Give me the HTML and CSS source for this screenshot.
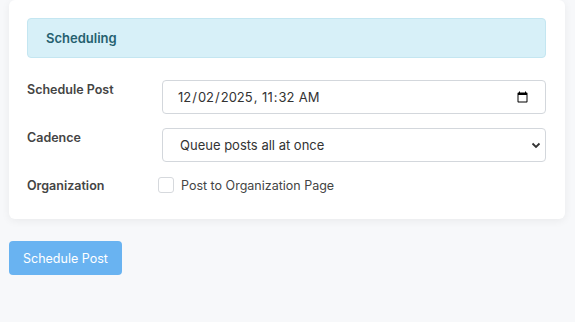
FILE: index.html
```html
<!DOCTYPE html>
<html lang="en">
<head>
    <meta charset="UTF-8">
    <meta name="viewport" content="width=device-width, initial-scale=1.0">
    <title>Schedule Post</title>
    <link rel="stylesheet" href="styles.css">
</head>
<body>

<div class="card">
    <div class="section-title">Scheduling</div>

    <div class="form-row">
        <label class="row-label" for="scheduleAt">Schedule Post</label>
        <input type="datetime-local" id="scheduleAt" value="2025-12-02T11:32">
    </div>
    <div class="form-row">
        <label class="row-label" for="cadence">Cadence</label>
        <select id="cadence">
            <option>Queue posts all at once</option>
            <option>One post per day</option>
            <option>One post per week</option>
        </select>
    </div>
    <div class="form-row check-row">
        <span class="row-label">Organization</span>
        <label class="check-label"><input type="checkbox" id="orgPage"> Post to Organization Page</label>
    </div>
</div>

<button class="button">Schedule Post</button>

</body>
</html>
```

FILE: styles.css
```css
body {
    font-family: Inter, "Noto Sans", Arial, sans-serif;
    background-color: #f7f8fa;
    margin: 0;
    padding: 0 10px 0 9px;
    color: #333;
}
.card {
    background: white;
    border-radius: 6px;
    box-shadow: 0 2px 8px rgba(0, 0, 0, 0.06);
    padding: 18px 19px 25px 18px;
}
.section-title {
    background-color: #d7f0f8;
    border: 1px solid #c4e6f1;
    border-radius: 4px;
    color: #25606f;
    font-size: 13px;
    font-weight: 600;
    height: 38px;
    line-height: 38px;
    padding-left: 18px;
    margin-bottom: 22px;
}
.form-row {
    display: flex;
    margin-bottom: 14px;
}
.row-label {
    width: 135px;
    flex-shrink: 0;
    font-size: 12.5px;
    font-weight: 600;
    color: #444;
    padding-top: 2px;
}
input[type="datetime-local"], select {
    flex: 1;
    height: 34px;
    padding: 0 14px;
    border: 1px solid #d3d7dc;
    border-radius: 4px;
    font-family: inherit;
    font-size: 13px;
    color: #333;
    background-color: white;
    box-sizing: border-box;
}
select {
    appearance: none;
    padding-left: 17px;
    background-image: url("data:image/svg+xml,%3Csvg xmlns='http://www.w3.org/2000/svg' width='10' height='8' viewBox='0 0 10 8'%3E%3Cpath d='M1.5 2.5 5 6 8.5 2.5' fill='none' stroke='%23333' stroke-width='1.8'/%3E%3C/svg%3E");
    background-repeat: no-repeat;
    background-position: right 4px center;
}
.check-row {
    align-items: center;
    margin-bottom: 0;
    height: 18px;
}
.check-row .row-label {
    padding-top: 0;
}
.check-label {
    display: flex;
    align-items: center;
    gap: 7px;
    font-size: 12.5px;
    color: #444;
    margin-left: -4px;
}
.check-label input {
    width: 16px;
    height: 16px;
    margin: 0;
    appearance: none;
    border: 1px solid #d6d9dd;
    border-radius: 3px;
    background: white;
}
.button {
    background-color: #69b3f1;
    color: white;
    font-family: inherit;
    font-size: 12.5px;
    padding: 0 14px;
    height: 34px;
    border: none;
    border-radius: 4px;
    cursor: pointer;
    margin-top: 22px;
}
```
